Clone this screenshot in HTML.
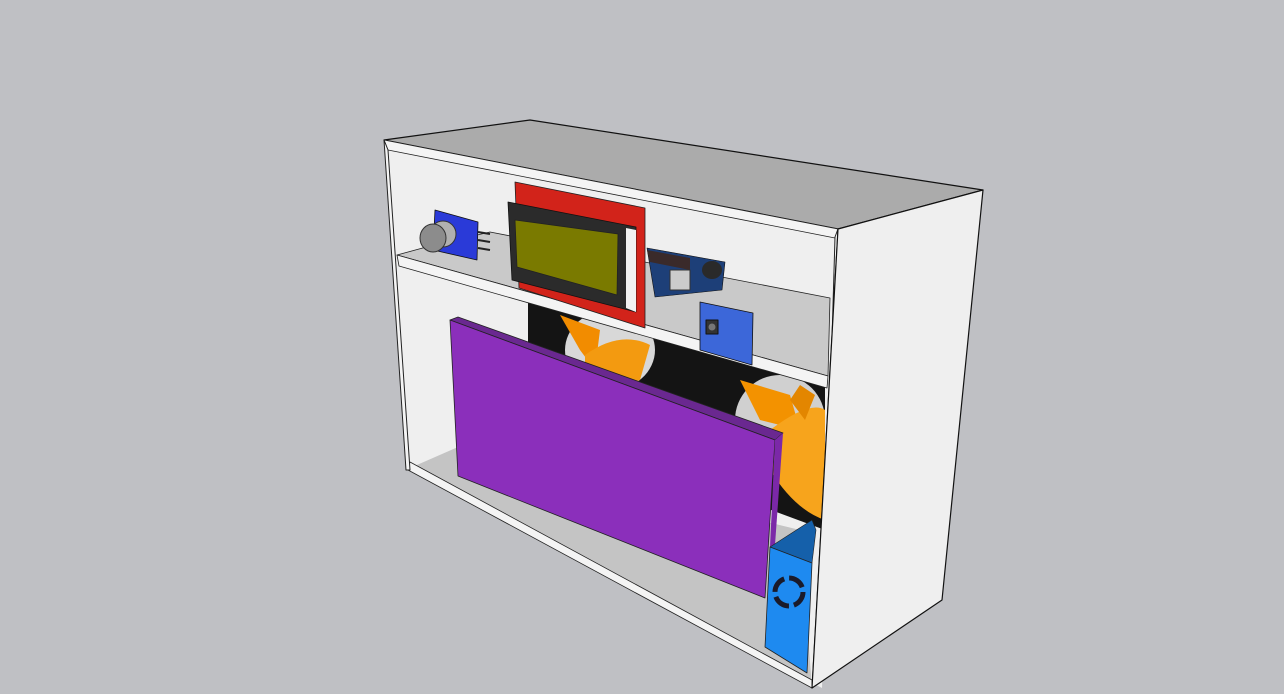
<!DOCTYPE html>
<html><head><style>html,body{margin:0;padding:0;background:#bfc0c4;}svg{display:block}</style></head>
<body>
<svg width="1284" height="694" viewBox="0 0 1284 694" xmlns="http://www.w3.org/2000/svg" stroke-linejoin="round">
<rect width="1284" height="694" fill="#bfc0c4"/>
<polygon points="384,140 530,120 983,190 838,229" fill="#ababab" stroke="#111" stroke-width="1.2"/>
<polygon points="388,150 835,237 822,688 410,470" fill="#efefef"/>
<polygon points="384,140 838,229 835,238 388,150" fill="#f4f4f4" stroke="#222" stroke-width="0.8"/>
<!-- fans behind -->
<polygon points="528,300 825,380 825,530 528,420" fill="#141414"/>
<ellipse cx="610" cy="350" rx="45" ry="40" fill="#d8d8d8"/>
<path d="M560,315 L600,330 L595,370 L580,350 Z" fill="#f28c00"/>
<path d="M585,355 Q620,330 650,345 L640,380 Q610,390 585,375 Z" fill="#f39a10"/>
<ellipse cx="780" cy="420" rx="45" ry="45" fill="#d0d0d0"/>
<path d="M740,380 L790,395 L800,430 L760,420 Z" fill="#f39200"/>
<path d="M770,430 Q810,400 825,410 L825,520 Q795,510 770,470 Z" fill="#f7a41c"/>
<path d="M790,400 L800,385 L815,395 L805,420 Z" fill="#e38600"/>
<!-- shelf -->
<polygon points="397,255 430,246 490,232 830,298 828,376" fill="#c9c9c9" stroke="#222" stroke-width="0.8"/>
<polygon points="397,255 828,376 827,388 399,266" fill="#f4f4f4" stroke="#222" stroke-width="0.8"/>
<!-- floor -->
<polygon points="410,468 458,447 800,530 812,688" fill="#c4c4c4"/>
<polygon points="410,462 812,680 812,688 408,470" fill="#f4f4f4" stroke="#222" stroke-width="0.8"/>
<polygon points="384,140 388,150 410,470 406,470" fill="#f4f4f4" stroke="#222" stroke-width="1"/>
<polygon points="835,237 838,229 812,688 822,680" fill="#f4f4f4" stroke="#222" stroke-width="1"/>
<polygon points="838,229 983,190 942,600 812,688" fill="#efefef" stroke="#111" stroke-width="1.2"/>
<!-- purple panel -->
<polygon points="450,320 458,317 783,433 775,440" fill="#6a2890" stroke="#222" stroke-width="0.8"/>
<polygon points="450,320 775,440 765,598 458,476" fill="#8b2fbb" stroke="#222" stroke-width="0.8"/>
<polygon points="775,440 783,433 775,545 770,547" fill="#7b28a8"/>
<!-- blue sensor box -->
<polygon points="770,547 812,520 816,530 812,563" fill="#1560aa" stroke="#222" stroke-width="0.6"/>
<polygon points="770,547 812,563 807,673 765,647" fill="#1e8af0" stroke="#222" stroke-width="0.8"/>
<circle cx="789" cy="592" r="14" fill="none" stroke="#1a1a2a" stroke-width="5" stroke-dasharray="17 5"/>
<!-- gas sensor -->
<polygon points="435,210 478,222 477,260 433,250" fill="#2a3ad8" stroke="#111" stroke-width="0.8"/>
<line x1="478" y1="232" x2="490" y2="234" stroke="#222" stroke-width="2"/>
<line x1="478" y1="240" x2="490" y2="242" stroke="#222" stroke-width="2"/>
<line x1="478" y1="248" x2="490" y2="250" stroke="#222" stroke-width="2"/>
<ellipse cx="443" cy="234" rx="13" ry="13" fill="#b0b0b0" stroke="#333"/>
<ellipse cx="433" cy="238" rx="13" ry="14" fill="#8c8c8c" stroke="#333"/>
<!-- arduino -->
<polygon points="647,248 725,262 722,290 655,297" fill="#1d3f78" stroke="#111" stroke-width="0.6"/>
<polygon points="647,250 690,258 690,270 650,262" fill="#3a2a2a"/>
<rect x="670" y="270" width="20" height="20" fill="#ccc" stroke="#333"/>
<ellipse cx="712" cy="270" rx="10" ry="9" fill="#2a2a2a"/>
<!-- blue button module -->
<polygon points="700,302 753,313 752,365 700,350" fill="#3c67d9" stroke="#111" stroke-width="0.8"/>
<rect x="706" y="320" width="12" height="14" fill="#333" stroke="#111"/>
<circle cx="712" cy="327" r="3.5" fill="#777"/>
<!-- LCD -->
<polygon points="515,182 645,208 645,328 519,288" fill="#d2231a" stroke="#222" stroke-width="0.8"/>
<polygon points="508,202 636,227 636,312 512,280" fill="#2b2b2b" stroke="#111" stroke-width="0.8"/>
<polygon points="626,228 636,230 636,312 626,308" fill="#f2f2f2"/>
<polygon points="515,220 618,234 617,295 517,267" fill="#7a7a00" stroke="#222" stroke-width="0.8"/>
</svg>
</body></html>
